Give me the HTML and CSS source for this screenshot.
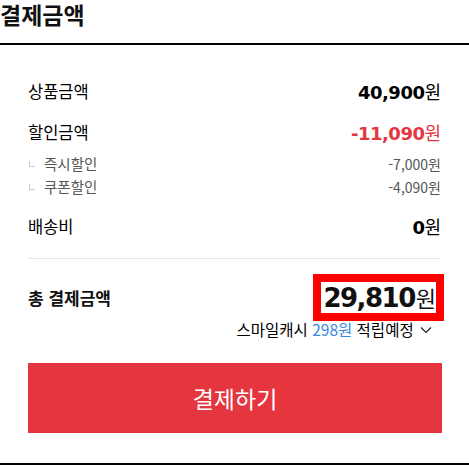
FILE: index.html
```html
<!DOCTYPE html>
<html lang="ko">
<head>
  <meta charset="UTF-8">
  <title>결제금액</title>
  <link rel="stylesheet" href="styles.css">
</head>
<body>

  <section class="pay-summary">
    <h2 class="pay-title">결제금액</h2>

    <ul class="price-list">
      <li class="price-row">
        <span class="label">상품금액</span>
        <span class="amount"><b>40,900</b>원</span>
      </li>
      <li class="price-row discount">
        <span class="label">할인금액</span>
        <span class="amount"><b>-11,090</b>원</span>
      </li>
      <li class="sub-list">
        <div class="sub-row">
          <span class="label"><i class="corner"></i>즉시할인</span>
          <span class="amount">-7,000원</span>
        </div>
        <div class="sub-row">
          <span class="label"><i class="corner"></i>쿠폰할인</span>
          <span class="amount">-4,090원</span>
        </div>
      </li>
      <li class="price-row">
        <span class="label">배송비</span>
        <span class="amount"><b>0</b>원</span>
      </li>
    </ul>

    <div class="total">
      <div class="total-row">
        <span class="label">총 결제금액</span>
        <span class="total-amount"><b>29,810</b>원</span>
      </div>
      <p class="cash">
        스마일캐시 <em>298원</em> 적립예정
        <svg class="chevron" width="12" height="8" viewBox="0 0 12 8">
          <polyline points="1,1.5 6,6.5 11,1.5" fill="none" stroke="#222" stroke-width="1.2"/>
        </svg>
      </p>
    </div>

    <!-- 결제 버튼 -->
    <button class="pay-button" type="button">결제하기</button>
  </section>

</body>
</html>
```

FILE: styles.css
```css
body {
  margin: 0;
  background: #fff;
  color: #111;
  font-family: "Noto Sans CJK KR", "Noto Sans", sans-serif;
}

.pay-summary {
  width: 469px;
  border-bottom: 2px solid #000;
}

.pay-title {
  margin: 0;
  font-size: 23px;
  font-weight: 700;
  line-height: 24px;
  padding: 2px 0 17px;
  border-bottom: 2px solid #000;
  color: #111;
}

.price-list {
  list-style: none;
  margin: 0 28px;
  padding: 25px 0 0;
  border-bottom: 1px solid #e5e5e5;
}

.price-row {
  display: flex;
  justify-content: space-between;
  align-items: center;
  height: 41px;
  font-size: 16.5px;
  color: #000;
}

.price-row:last-child {
  margin-bottom: 12px;
}

.amount {
  font-size: 18px;
}

.amount b,
.total-amount b {
  font-family: "DejaVu Sans", sans-serif;
  font-weight: 700;
  letter-spacing: -0.5px;
}

.discount .amount {
  color: #e5363f;
}

.sub-list {
  padding-bottom: 7px;
}

.sub-row {
  display: flex;
  justify-content: space-between;
  align-items: center;
  height: 23px;
  font-size: 14.5px;
  color: #555;
}

.sub-row .amount {
  font-size: 14px;
}

.corner {
  display: inline-block;
  width: 5px;
  height: 5px;
  border-left: 1px solid #ccc;
  border-bottom: 1px solid #ccc;
  margin: 0 9px 4px 1px;
  vertical-align: middle;
}

.total {
  margin: 0 28px;
  padding-top: 23px;
}

.total-row {
  display: flex;
  justify-content: space-between;
  align-items: center;
  height: 30px;
}

.total-row .label {
  font-size: 17px;
  font-weight: 700;
}

.total-amount {
  display: inline-block;
  line-height: 30px;
  font-size: 22px;
  margin-right: 5px;
  padding-left: 2px;
  outline: 8px solid #f00;
  background: #fff;
}

.total-amount b {
  font-size: 26px;
  letter-spacing: -1.5px;
  margin-right: 1px;
}

.cash {
  margin: 8px 0 0;
  padding-right: 9px;
  text-align: right;
  font-size: 15.5px;
  line-height: 18px;
  color: #000;
}

.cash em {
  font-style: normal;
  color: #3a87e0;
}

.chevron {
  vertical-align: 2px;
  margin-left: 2px;
}

.pay-button {
  display: block;
  width: 414px;
  height: 70px;
  margin: 25px 28px 30px;
  border: none;
  background: #e5363f;
  color: #fff;
  font-family: inherit;
  font-size: 23px;
  cursor: pointer;
}
```
